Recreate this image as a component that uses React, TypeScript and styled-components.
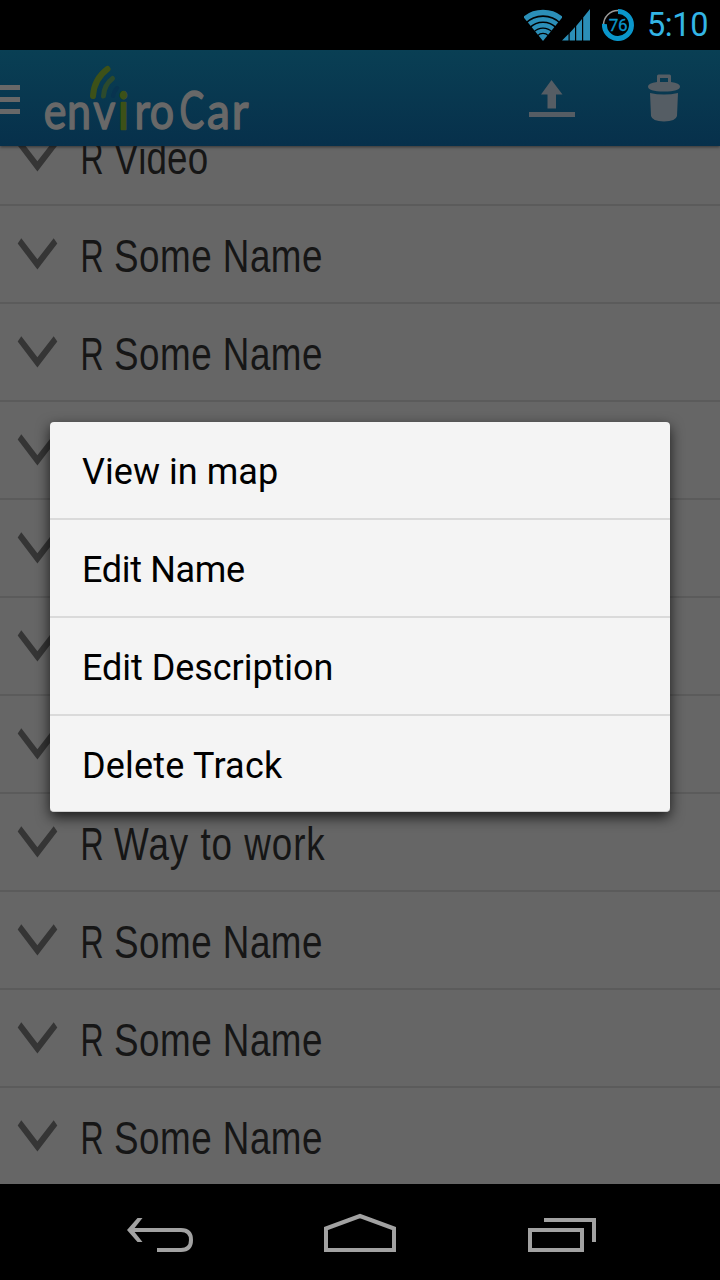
import React from 'react';
import styled, { createGlobalStyle } from 'styled-components';

const Global = createGlobalStyle`
  * { box-sizing: border-box; }
  body { margin: 0; background: #000; }
  svg { display: block; flex: none; }
`;

const Screen = styled.div`
  position: relative;
  display: flex;
  flex-direction: column;
  width: 720px;
  height: 1280px;
  overflow: hidden;
  background: #000;
  font-family: Roboto, sans-serif;
`;

const StatusBar = styled.div`
  display: flex;
  align-items: flex-start;
  justify-content: flex-end;
  height: 50px;
  flex: none;
  padding-right: 11px;
`;

const StatusGroup = styled.div`
  display: flex;
  margin-right: 11px;
`;

const Clock = styled.div`
  width: 62px;
  margin-left: 12px;
  font-size: 32.5px;
  line-height: 51px;
  letter-spacing: -0.4px;
  white-space: nowrap;
  color: #33b5e5;
`;

const ActionBar = styled.header`
  display: flex;
  align-items: center;
  height: 96px;
  flex: none;
  position: relative;
  background: linear-gradient(#093f54, #07304b);
  box-shadow: 0 1px 3px rgba(0, 0, 0, 0.5);
`;

const Actions = styled.div`
  display: flex;
  margin-left: auto;
`;

const ActionButton = styled.div`
  display: flex;
  align-items: center;
  justify-content: center;
  width: 112px;
  height: 96px;
`;

const List = styled.main`
  flex: 1;
  min-height: 0;
  overflow: hidden;
  background: #666;
`;

const ListInner = styled.div`
  display: flex;
  flex-direction: column;
  margin-top: -38px;
`;

const Row = styled.div`
  display: flex;
  align-items: flex-start;
  height: 98px;
  flex: none;
  padding-left: 17px;
  border-bottom: 2px solid #5b5b5b;
`;

const TrackName = styled.span<{ $tracking: number }>`
  margin-left: 22px;
  font-family: 'Liberation Sans', sans-serif;
  font-size: 46px;
  line-height: 52px;
  padding-top: 24px;
  letter-spacing: ${(p) => p.$tracking}px;
  white-space: pre;
  color: #161616;
  transform: scaleX(0.8);
  transform-origin: 0 0;
`;

const Prefix = styled.span`
  display: inline-block;
  letter-spacing: -1.7px;
  transform: scaleX(0.87);
  transform-origin: 10% 0;
`;

const NavBar = styled.nav`
  display: flex;
  justify-content: center;
  height: 96px;
  flex: none;
`;

const Dialog = styled.div`
  position: absolute;
  left: 50px;
  top: 422px;
  width: 620px;
  height: 390px;
  border-radius: 4px;
  overflow: hidden;
  background: #f4f4f4;
  box-shadow: 0 5px 14px rgba(0, 0, 0, 0.75);
  border-bottom: 1px solid #d0d0d0;
`;

const MenuItem = styled.div<{ $tracking: number }>`
  height: 98px;
  padding-left: 32px;
  font-size: 36px;
  line-height: 100px;
  letter-spacing: ${(p) => p.$tracking}px;
  color: #000;
  border-bottom: 2px solid #dadada;
  &:last-child { height: 95px; border-bottom: 0; }
`;

const Wifi = () => (
  <svg width="38" height="50" viewBox="1 0 38 50">
    <clipPath id="fan"><path d="M20 41 L-3 13 L-3 0 L43 0 L43 13Z" /></clipPath>
    <g clipPath="url(#fan)" fill="none" stroke="#2b8fb8" strokeWidth="4.400">
      <circle cx="20" cy="41" r="28.500" strokeWidth="5.500" />
      <circle cx="20" cy="41" r="21.800" />
      <circle cx="20" cy="41" r="15.700" />
      <circle cx="20" cy="41" r="10.200" strokeWidth="4" />
      <circle cx="20" cy="41" r="3.500" strokeWidth="7" />
    </g>
  </svg>
);

const Signal = () => (
  <svg width="28" height="50" viewBox="1 0 28 50" fill="#2b8fb8">
    <path d="M1 40.500L7.500 34V40.500Z M8.700 33L14 27V40.500H8.700Z M15.200 26L21 19V40.500H15.200Z M22.200 17.500L29 9V40.500H22.200Z" />
  </svg>
);

const Battery = () => (
  <svg width="34" height="50" viewBox="0 0 34 50">
    <circle cx="17" cy="25" r="14.500" fill="none" stroke="#999" strokeWidth="1.500" />
    <path d="M17 11.500A13.500 13.500 0 1 1 3.500 24" fill="none" stroke="#0a96cb" strokeWidth="5" />
    <text x="17" y="31" textAnchor="middle" fontFamily="Roboto, sans-serif" fontSize="17" fill="#0a96cb" stroke="#0a96cb" strokeWidth="0.300" letterSpacing="-0.300">76</text>
  </svg>
);

const Drawer = () => (
  <svg width="20" height="96" viewBox="0 0 20 96" fill="#686868">
    <path d="M0 35H20V40H0Z M0 47H20V52H0Z M0 59H20V64H0Z" />
  </svg>
);

const Logo = () => (
  <svg width="236" height="96" viewBox="20 50 236 96">
    <g fill="none" strokeLinecap="round">
      <path d="M107.500 69Q94 79 93 96" stroke="#3d5118" strokeWidth="6" />
      <path d="M112.500 78.500Q104 85 103.500 96" stroke="#2c4a2d" strokeWidth="5" />
      <path d="M117 88Q114 91 113 96" stroke="#08334f" strokeWidth="4" />
    </g>
    <g
      fontFamily="Lato, sans-serif"
      fontSize="50"
      fill="#686868"
      stroke="#686868"
      strokeWidth="1.500"
      strokeLinejoin="round"
    >
      <text transform="translate(0 129) scale(.86 1)" x="51 78 108.500 137.500 156.500 174" y="0">
        env<tspan fill="#3d5118" stroke="#3d5118" strokeWidth="2.500">i</tspan>ro
      </text>
      <text transform="translate(179.500 129) scale(.74 1.050)">C</text>
      <text transform="translate(0 129) scale(.92 1)" x="225 252" y="0">ar</text>
    </g>
  </svg>
);

const Upload = () => (
  <svg width="112" height="96" viewBox="496 50 112 96" fill="#555d64">
    <path d="M551.500 80L562.500 94.500H556V108.500H547.500V94.500H541Z M529 112H575V117H529Z" />
  </svg>
);

const Trash = () => (
  <svg width="112" height="96" viewBox="608 50 112 96" fill="#555d64">
    <path fillRule="evenodd" d="M657 82V76Q657 74.500 658.500 74.500H669.500Q671 74.500 671 76V82Q680 83 680 86.500Q680 91.500 664 91.500Q648 91.500 648 86.500Q648 83 657 82ZM660 78V82H668V78Z" />
    <path d="M650 93Q664 96 678 93L677 116Q676 121 664 121.500Q652 121 651 116Z" />
  </svg>
);

const Chevron = () => (
  <svg width="41" height="96" viewBox="17 206 41 96" fill="#353535">
    <path d="M17.700 243.500L21.300 238.300L37.400 259.300L53.700 238.300L57.300 243.500L37.400 269.400Z" />
  </svg>
);

const NavIcons = () => (
  <>
    <svg width="200" height="96" viewBox="60 1184 200 96">
      <path d="M131 1230H181Q191 1230 191 1240Q191 1250 181 1250H157" fill="none" stroke="#a2a2a2" strokeWidth="4" />
      <path d="M127 1230L137.500 1218H142.500L133 1230L142.500 1242H137.500Z" fill="#a2a2a2" />
    </svg>
    <svg width="200" height="96" viewBox="260 1184 200 96">
      <path d="M326 1250V1228.500L360 1216L394 1228.500V1250Z" fill="none" stroke="#a2a2a2" strokeWidth="4" />
    </svg>
    <svg width="200" height="96" viewBox="460 1184 200 96">
      <path d="M530 1230H582V1250H530Z M544 1220H594V1242" fill="none" stroke="#a2a2a2" strokeWidth="4" />
    </svg>
  </>
);

const someName = { name: 'Some Name', tracking: 0.6 };

const tracks = [
  { name: 'Video', tracking: 0.2 },
  someName,
  someName,
  null,
  null,
  null,
  null,
  { name: 'Way to work', tracking: 1.2 },
  someName,
  someName,
  someName,
];

const menu = [
  { label: 'View in map', tracking: 0.05 },
  { label: 'Edit Name', tracking: -0.35 },
  { label: 'Edit Description', tracking: -0.05 },
  { label: 'Delete Track', tracking: 0.2 },
];

export default function App() {
  return (
    <Screen>
      <Global />
      <StatusBar>
        <StatusGroup>
          <Wifi />
          <Signal />
        </StatusGroup>
        <Battery />
        <Clock>5:10</Clock>
      </StatusBar>
      <ActionBar>
        <Drawer />
        <Logo />
        <Actions>
          <ActionButton><Upload /></ActionButton>
          <ActionButton><Trash /></ActionButton>
        </Actions>
      </ActionBar>
      <List>
        <ListInner>
          {tracks.map((track, i) => (
            <Row key={i}>
              <Chevron />
              {track && (
                <TrackName $tracking={track.tracking}>
                  <Prefix>{'R '}</Prefix>
                  {track.name}
                </TrackName>
              )}
            </Row>
          ))}
        </ListInner>
      </List>
      <NavBar><NavIcons /></NavBar>
      <Dialog>
        {menu.map((m) => (
          <MenuItem key={m.label} $tracking={m.tracking}>{m.label}</MenuItem>
        ))}
      </Dialog>
    </Screen>
  );
}
